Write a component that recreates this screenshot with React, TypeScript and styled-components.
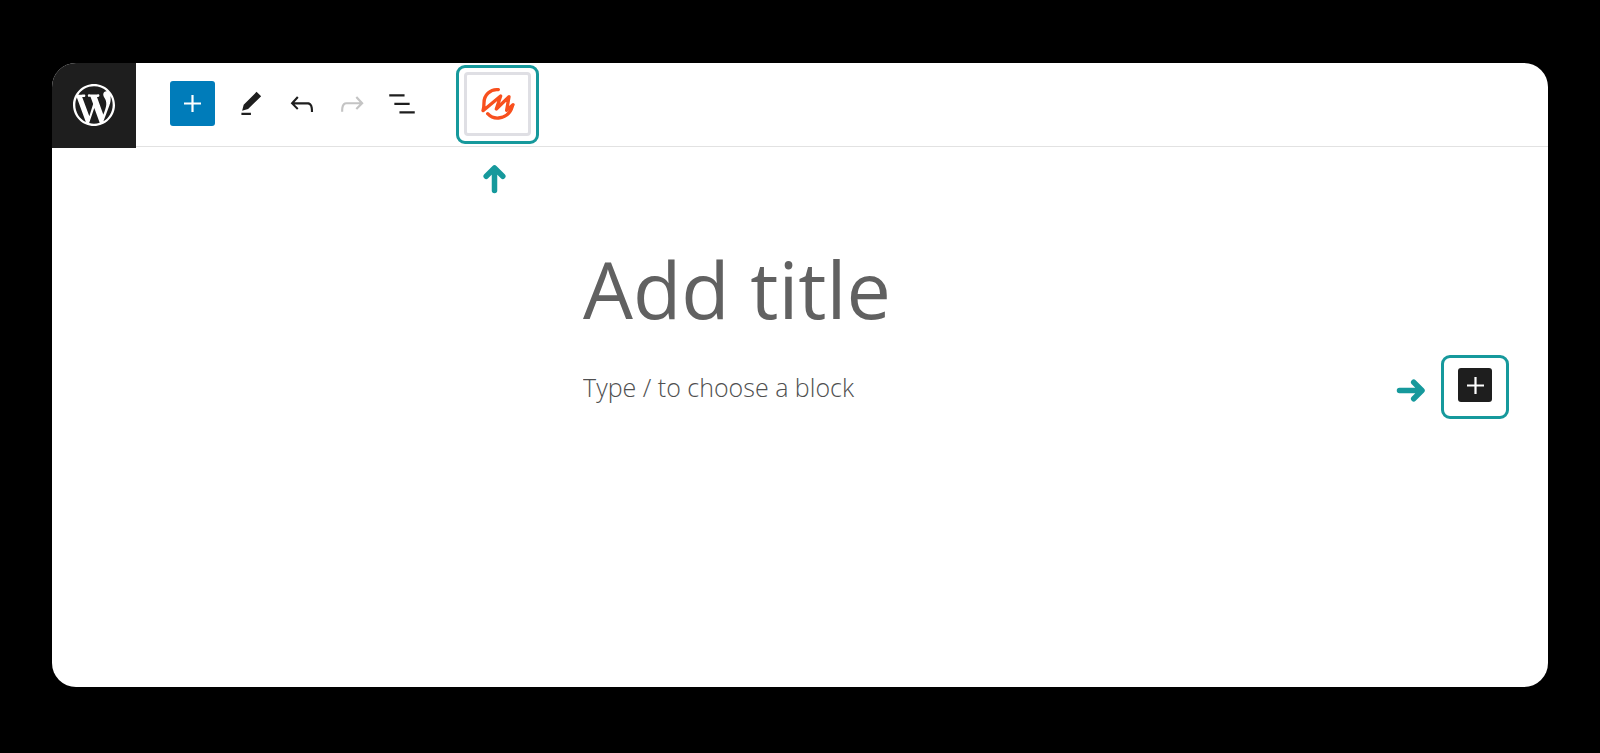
import React from "react";
import styled, { createGlobalStyle } from "styled-components";

const TEAL = "#16999c";
const INK = "#1e1e1e";

const GlobalStyle = createGlobalStyle`
  *, *::before, *::after { box-sizing: border-box; }
  body {
    margin: 0;
    background: #000;
    font-family: "Open Sans", "Noto Sans", sans-serif;
  }
  button, input { font: inherit; }
`;

const Page = styled.div`
  display: flex;
  min-height: 100vh;
  padding: 63px 52px 66px;
`;

const Editor = styled.div`
  flex: 1;
  min-width: 0;
  overflow: hidden;
  background: #fff;
  border-radius: 24px;
`;

const TopBar = styled.header`
  display: flex;
  align-items: center;
  height: 84px;
  border-bottom: 1px solid #e2e2e2;
`;

const HomeLink = styled.a`
  display: flex;
  align-items: center;
  justify-content: center;
  width: 84px;
  height: 85px;
  margin-bottom: -2px;
  padding-bottom: 2px;
  color: #fff;
  background: ${INK};
`;

const AddButton = styled.button<{ $size: number; $color: string }>`
  display: flex;
  align-items: center;
  justify-content: center;
  width: ${(p) => p.$size}px;
  height: ${(p) => p.$size}px;
  padding: 0;
  border: 0;
  border-radius: 3px;
  color: #fff;
  background: ${(p) => p.$color};
`;

const Tools = styled.div`
  display: flex;
  align-items: center;
  padding: 0 29px 2px 34px;
`;

const ToolGroup = styled.div`
  display: flex;
  margin-left: 12px;
`;

const ToolButton = styled.button`
  display: flex;
  align-items: center;
  justify-content: center;
  width: 50px;
  height: 50px;
  padding: 0;
  border: 0;
  color: ${INK};
  background: none;

  &:disabled { color: #c4c4c4; }
`;

const Highlight = styled.div<{ $width: number; $height: number; $bottom: number }>`
  position: relative;
  display: flex;
  flex: none;
  align-items: center;
  justify-content: center;
  width: ${(p) => p.$width}px;
  height: ${(p) => p.$height}px;
  padding-bottom: ${(p) => p.$bottom}px;
  border: 3px solid ${TEAL};
  border-radius: 9px;
`;

const PluginButton = styled.button`
  display: flex;
  align-items: center;
  justify-content: center;
  width: 67px;
  height: 64px;
  padding: 0;
  border: 3px solid #dfdfe4;
  border-radius: 4px;
  background: #fff;
`;

const PointerBelow = styled.div`
  position: absolute;
  top: 96px;
  left: 24px;
`;

const PointerBeside = styled.div`
  padding-top: 7px;
`;

const Canvas = styled.main`
  padding: 94px 39px 0 35.5%;
`;

const PlainInput = styled.input`
  flex: 1;
  width: 100%;
  min-width: 0;
  padding: 0;
  border: 0;
  outline: 0;
  background: none;
  color: ${INK};

  &::placeholder { color: #616161; opacity: 1; }
`;

const TitleInput = styled(PlainInput)`
  display: block;
  height: 96px;
  font-size: 79px;
  line-height: 96px;
`;

const BlockRow = styled.div`
  display: flex;
  align-items: center;
  gap: 15px;
  margin-top: 18px;
`;

const BlockInput = styled(PlainInput)`
  height: 36px;
  font-size: 25px;
  font-weight: 300;
  line-height: 36px;

  &::placeholder { color: #505050; }
`;

const Icon = ({ d, viewBox = "0 0 24 24", size = 34 }: { d: string; viewBox?: string; size?: number }) => (
  <svg width={size} height={size} viewBox={viewBox} fill="currentColor" aria-hidden="true">
    <path d={d} />
  </svg>
);

const WORDPRESS =
  "M20 10c0-5.51-4.49-10-10-10C4.48 0 0 4.49 0 10c0 5.52 4.48 10 10 10 5.51 0 10-4.48 10-10zM7.78 15.37L4.37 6.22c.55-.02 1.17-.08 1.17-.08.5-.06.44-1.13-.06-1.11 0 0-1.45.11-2.37.11-.18 0-.37 0-.58-.01C4.12 2.69 6.87 1.11 10 1.11c2.33 0 4.45.87 6.05 2.34-.68-.11-1.65.39-1.65 1.58 0 .74.45 1.36.9 2.1.35.61.55 1.36.55 2.46 0 1.49-1.4 5-1.4 5l-3.03-8.37c.54-.02.82-.17.82-.17.5-.05.44-1.25-.06-1.22 0 0-1.44.12-2.38.12-.87 0-2.33-.12-2.33-.12-.5-.03-.56 1.2-.06 1.22l.92.08 1.26 3.41zM17.41 10c.24-.64.74-1.87.43-4.25.7 1.29 1.05 2.71 1.05 4.25 0 3.29-1.73 6.24-4.4 7.78.97-2.59 1.94-5.2 2.92-7.78zM6.1 18.09C3.12 16.65 1.11 13.53 1.11 10c0-1.3.23-2.48.72-3.59C3.25 10.3 4.67 14.2 6.1 18.09zm4.03-6.63l2.58 6.98c-.86.29-1.76.45-2.71.45-.79 0-1.57-.11-2.29-.33.81-2.38 1.62-4.74 2.42-7.1z";

const Plus = () => (
  <svg width="17" height="17" viewBox="0 0 17 17" fill="none" stroke="currentColor" strokeWidth="2.2" aria-hidden="true">
    <path d="M8.5 0v17M0 8.5h17" />
  </svg>
);

const ArrowSvg = styled.svg`
  display: block;
  fill: none;
  stroke: ${TEAL};
  stroke-linecap: round;
  stroke-linejoin: round;
`;

const ArrowUp = () => (
  <ArrowSvg width="24" height="30" viewBox="0 0 24 30" strokeWidth="5.5" aria-hidden="true">
    <path d="M11.5 26.5V5M3.2 12.3 11.5 4 19.8 12.3" />
  </ArrowSvg>
);

const ArrowRight = () => (
  <ArrowSvg width="30" height="24" viewBox="0 0 30 24" strokeWidth="5.5" aria-hidden="true">
    <path d="M3.5 11.5H25M17.7 3.2 26 11.5 17.7 19.8" />
  </ArrowSvg>
);

const PluginLogo = () => (
  <svg
    width="34"
    height="34"
    viewBox="122 96 102 102"
    fill="none"
    stroke="#f8501e"
    strokeWidth="10"
    strokeLinecap="round"
    strokeLinejoin="round"
    aria-hidden="true"
  >
    <path d="M174 104C150 101 131 120 131 143C131 153 130 160 128 167L181 123L168 162L206 125L199 166L218 149" />
    <path d="M142 176C152 187 165 190 175 189C194 187 210 175 216 154" />
  </svg>
);

export default function App() {
  return (
    <>
      <GlobalStyle />
      <Page>
        <Editor>
          <TopBar>
            <HomeLink href="#" aria-label="View posts">
              <Icon size={42} viewBox="0 0 20 20" d={WORDPRESS} />
            </HomeLink>
            <Tools role="toolbar" aria-label="Document tools">
              <AddButton type="button" $size={45} $color="#007cba" aria-label="Toggle block inserter">
                <Plus />
              </AddButton>
              <ToolGroup>
                <ToolButton type="button" aria-label="Tools">
                  <Icon
                    viewBox="-1.4 -2.5 28.6 28.6"
                    d="M20.6 5.3L16.7 1.6 5.9 12.4l-1.3 5 5-1.3L20.6 5.3zM4 21h8v-1.8H4V21z"
                  />
                </ToolButton>
                <ToolButton type="button" aria-label="Undo">
                  <Icon d="M18.3 11.7c-.6-.6-1.4-.9-2.3-.9H6.7l2.9-3.3-1.1-1-4.5 5L8.5 16l1-1-2.7-2.7H16c.5 0 .9.2 1.3.5 1 1 1 3.4 1 4.5v.3h1.5v-.2c0-1.5 0-4.3-1.5-5.7z" />
                </ToolButton>
                <ToolButton type="button" aria-label="Redo" disabled>
                  <Icon d="M15.6 6.5l-1.1 1 2.9 3.3H8c-.9 0-1.7.3-2.3.9-1.4 1.5-1.4 4.2-1.4 5.6v.2h1.5v-.3c0-1.1 0-3.5 1-4.5.3-.3.7-.5 1.3-.5h9.2L14.5 15l1.1 1.1 4.6-4.6-4.6-5z" />
                </ToolButton>
                <ToolButton type="button" aria-label="Document overview">
                  <Icon d="M13.8 5.2H3v1.5h10.8V5.2zm-3.6 12v1.5H21v-1.5H10.2zm7.2-6H6.6v1.5h10.8v-1.5z" />
                </ToolButton>
              </ToolGroup>
            </Tools>
            <Highlight $width={83} $height={79} $bottom={2}>
              <PluginButton type="button" aria-label="Open template library">
                <PluginLogo />
              </PluginButton>
              <PointerBelow>
                <ArrowUp />
              </PointerBelow>
            </Highlight>
          </TopBar>
          <Canvas>
            <TitleInput type="text" placeholder="Add title" aria-label="Add title" />
            <BlockRow>
              <BlockInput type="text" placeholder="Type / to choose a block" aria-label="Type / to choose a block" />
              <PointerBeside>
                <ArrowRight />
              </PointerBeside>
              <Highlight $width={68} $height={64} $bottom={4}>
                <AddButton type="button" $size={34} $color={INK} aria-label="Add block">
                  <Plus />
                </AddButton>
              </Highlight>
            </BlockRow>
          </Canvas>
        </Editor>
      </Page>
    </>
  );
}
